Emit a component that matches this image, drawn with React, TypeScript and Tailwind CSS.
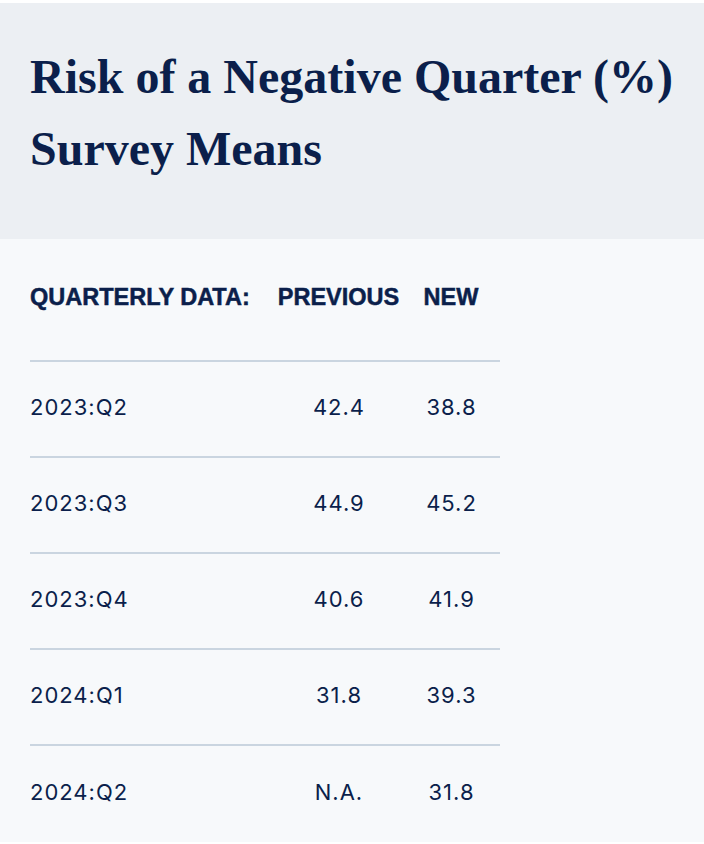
import React from "react";

const rows = [
  ["2023:Q2", "42.4", "38.8"],
  ["2023:Q3", "44.9", "45.2"],
  ["2023:Q4", "40.6", "41.9"],
  ["2024:Q1", "31.8", "39.3"],
  ["2024:Q2", "N.A.", "31.8"],
];

export default function App() {
  return (
    <div className="bg-white pt-[3px] pb-[4px] w-[704px]">
      <div className="bg-[#eceff3] px-[30px] pt-[38px] pb-[54px]">
        <h1 className="text-[48px] leading-[72px] font-bold text-[#0b1f4b]" style={{ fontFamily: '"Liberation Serif", serif' }}>
          Risk of a Negative Quarter (%)
          <br />
          Survey Means
        </h1>
      </div>
      <div className="bg-[#f7f9fb] px-[30px] text-[#0b1f4b]" style={{ fontFamily: '"Liberation Sans", Arial, sans-serif' }}>
        <div className="w-[470px]">
          <div className="grid grid-cols-[245px_147px_78px] pt-[44px] pb-[49px] border-b-2 border-[#cad5e0] text-[23.5px] leading-[28px] font-bold uppercase [-webkit-text-stroke:0.5px_#0b1f4b]">
            <div className="pr-[20px] whitespace-nowrap">Quarterly Data:</div>
            <div className="pr-[20px] text-center">Previous</div>
            <div className="pr-[20px] text-center">New</div>
          </div>
          {rows.map((r, i) => (
            <div
              key={r[0]}
              className={
                "grid grid-cols-[245px_147px_78px] items-center h-[96px] pb-[3px] text-[22px] tracking-[1px] " +
                (i < rows.length - 1 ? "border-b-2 border-[#cad5e0]" : "")
              }
              style={{ fontFamily: 'Inter, "Liberation Sans", sans-serif' }}
            >
              <div className="pr-[20px]">{r[0]}</div>
              <div className="pr-[19px] text-center">{r[1]}</div>
              <div className="pr-[19px] text-center">{r[2]}</div>
            </div>
          ))}
        </div>
      </div>
    </div>
  );
}
